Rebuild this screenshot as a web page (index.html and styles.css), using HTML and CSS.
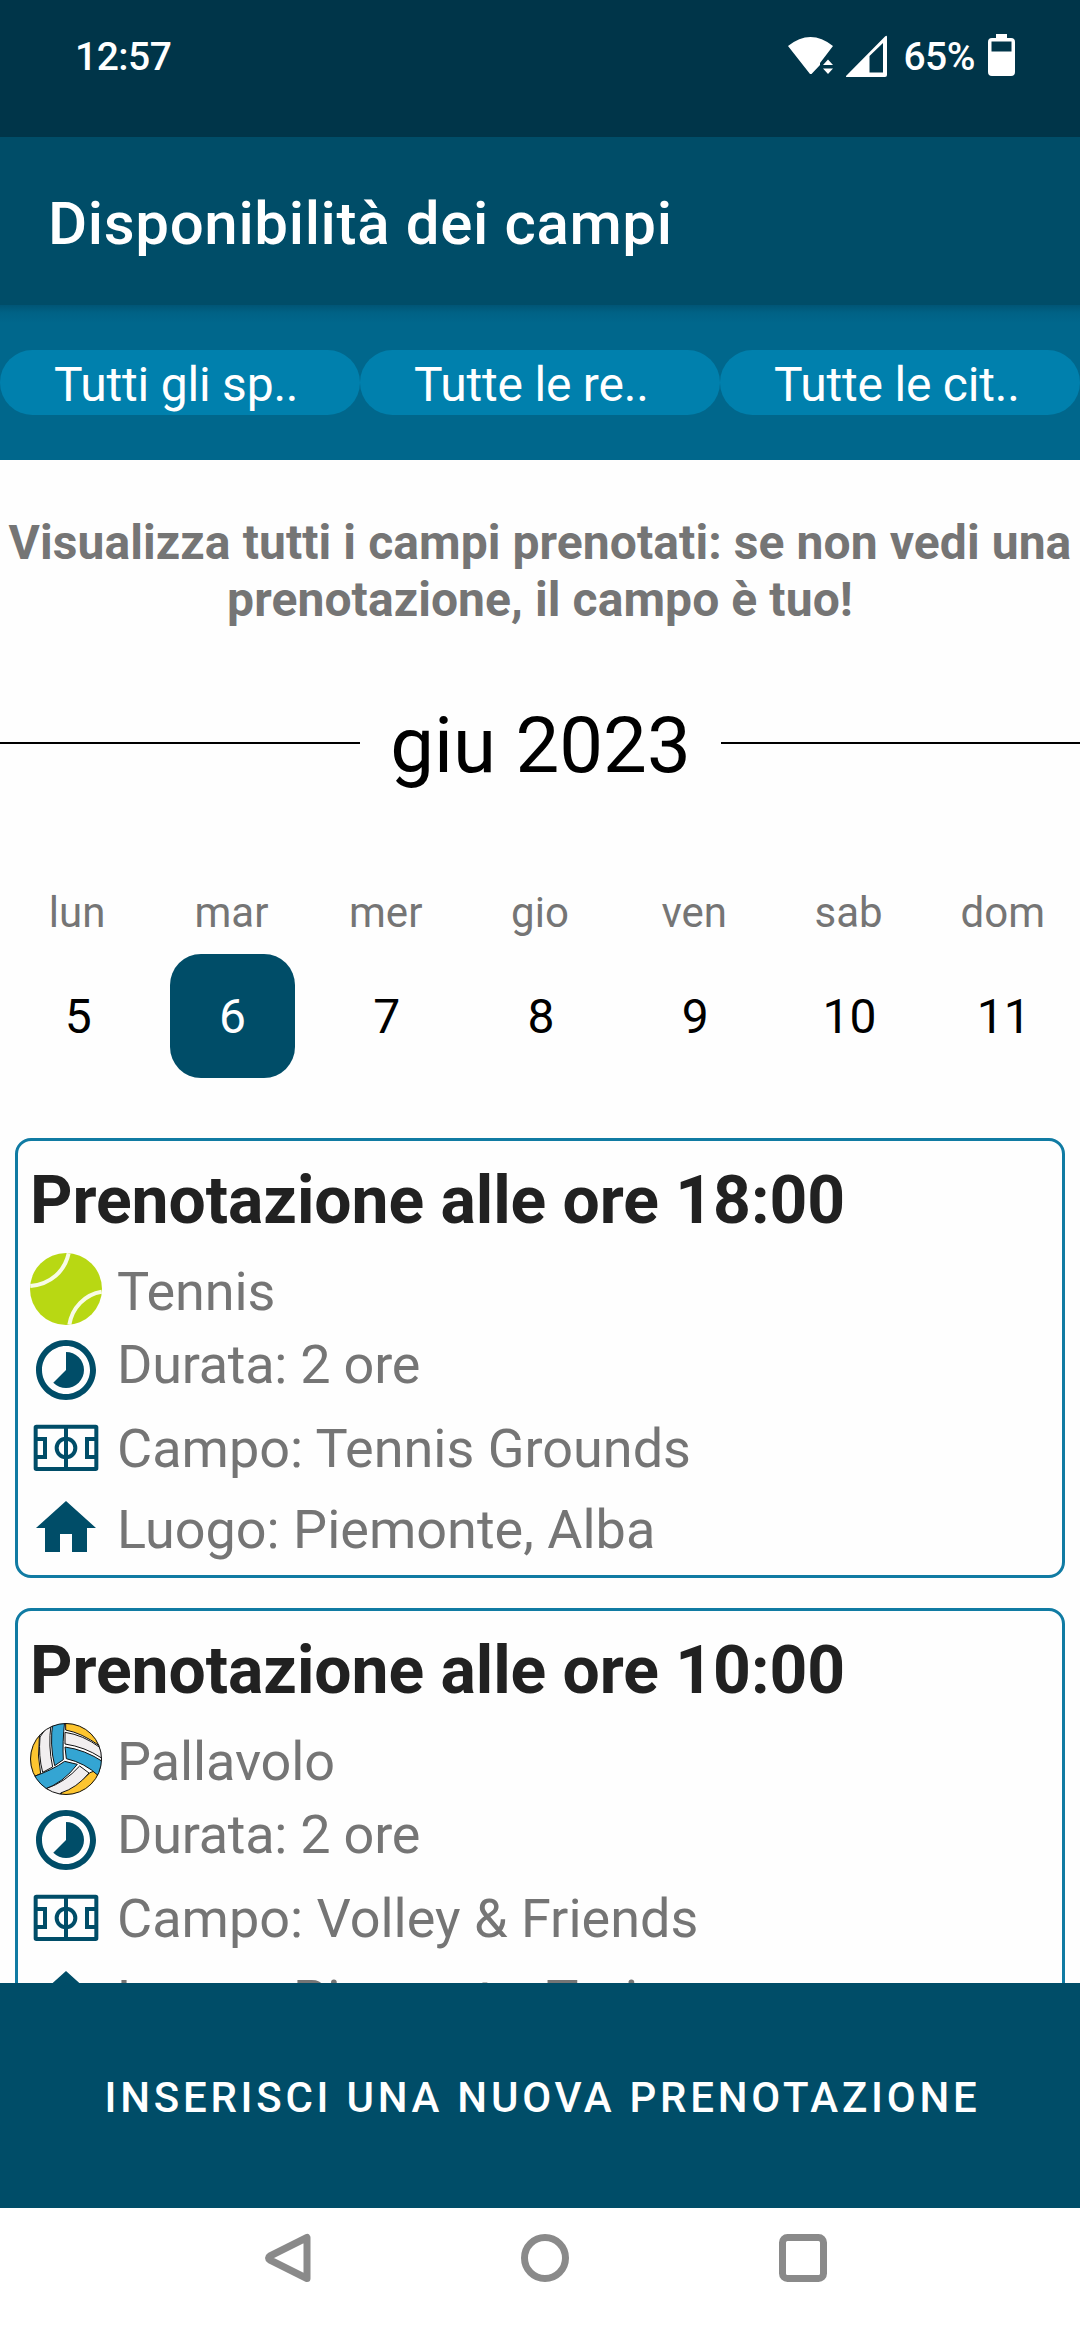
FILE: index.html
```html
<!DOCTYPE html>
<html lang="it">
<head>
<meta charset="utf-8">
<title>Disponibilità dei campi</title>
<link rel="stylesheet" href="styles.css">
</head>
<body>
<svg class="sprite" aria-hidden="true">
  <symbol id="timelapse" viewBox="0 0 24 24"><path d="M16.24 7.76C15.07 6.59 13.54 6 12 6v6l-4.24 4.24c2.34 2.34 6.14 2.34 8.49 0 2.34-2.34 2.34-6.14-.01-8.48zM12 2C6.48 2 2 6.48 2 12s4.48 10 10 10 10-4.48 10-10S17.52 2 12 2zm0 18c-4.42 0-8-3.58-8-8s3.58-8 8-8 8 3.58 8 8-3.58 8-8 8z"/></symbol>
  <symbol id="home" viewBox="0 0 24 24"><path d="M10 20v-6h4v6h5v-8h3L12 3 2 12h3v8z"/></symbol>
  <symbol id="field" viewBox="0 0 216 216"><g fill="none" stroke="currentColor" stroke-width="12"><rect x="17" y="44" width="182" height="127" rx="2"/><path d="M108 44v127M17 81h28v54H17M199 81h-28v54h28"/><circle cx="108" cy="108" r="28"/></g></symbol>
</svg>
<div class="screen">
  <header class="status">
    <span class="clock">12:57</span>
    <div class="indicators">
      <svg class="wifi" viewBox="0 0 45 38" width="45" height="38"><path d="M0 10Q22.500-8 45 10L37 20.500 32 27 32 29 23.500 38 22 38z"/><path class="cut" d="M33 38V27l6-7h6v18z"/><path d="M35 29l5-5.500 5 5.500zM35 32.500h10L40 38z"/></svg>
      <svg class="signal" viewBox="0 0 41 42" width="41" height="42"><path fill-rule="evenodd" d="M0 41L39 1.500Q41 0 41 2V40Q41 42 39 42H1Q-.5 42 0 41zM23.500 21V37.500H37V8z"/></svg>
      <span class="percent">65%</span>
      <svg class="battery" viewBox="0 0 27 42" width="27" height="42"><path fill-rule="evenodd" d="M8 0h11v4h4q4 0 4 4v30q0 4-4 4H4q-4 0-4-4V8q0-4 4-4h4zM3.500 7.500v10h20v-10z"/></svg>
    </div>
  </header>
  <div class="appbar"><h1>Disponibilità dei campi</h1></div>
  <div class="filters">
    <div class="pill">Tutti gli sp..</div>
    <div class="pill">Tutte le re..</div>
    <div class="pill">Tutte le cit..</div>
  </div>
  <main class="content">
    <p class="intro">Visualizza tutti i campi prenotati: se non vedi una<br>prenotazione, il campo è tuo!</p>
    <div class="month"><i class="rule"></i><span>giu 2023</span><i class="rule"></i></div>
    <div class="week">
      <div class="day"><span class="name">lun</span><span class="num">5</span></div>
      <div class="day"><span class="name">mar</span><span class="num selected">6</span></div>
      <div class="day"><span class="name">mer</span><span class="num">7</span></div>
      <div class="day"><span class="name">gio</span><span class="num">8</span></div>
      <div class="day"><span class="name">ven</span><span class="num">9</span></div>
      <div class="day"><span class="name">sab</span><span class="num">10</span></div>
      <div class="day"><span class="name">dom</span><span class="num">11</span></div>
    </div>
    <div class="list">
      <article class="card">
        <h2>Prenotazione alle ore 18:00</h2>
        <div class="row sport">
          <svg class="icon" viewBox="0 0 216 216"><circle cx="108" cy="108" r="108" fill="#b8d813"/><g fill="none" stroke="#f8fbe6" stroke-width="12"><path d="M116 1C104 55 62 94 1 99M215 116C165 124 126 164 118 215"/></g></svg>
          <span>Tennis</span>
        </div>
        <div class="row duration"><svg class="icon"><use href="#timelapse"/></svg><span>Durata: 2 ore</span></div>
        <div class="row court"><svg class="icon"><use href="#field"/></svg><span>Campo: Tennis Grounds</span></div>
        <div class="row place"><svg class="icon"><use href="#home"/></svg><span>Luogo: Piemonte, Alba</span></div>
      </article>
      <article class="card">
        <h2>Prenotazione alle ore 10:00</h2>
        <div class="row sport">
          <svg class="icon" viewBox="0 0 216 216">
            <clipPath id="ball"><circle cx="108" cy="108" r="107"/></clipPath>
            <g clip-path="url(#ball)" stroke="#111" stroke-width="3">
              <rect width="216" height="216" fill="#fff"/>
              <path fill="#fdc530" d="M107-5V21Q155 30 208 68L230 0zM28-5V45Q21 100 32 152L10 162-10 100zM230 130L180 149Q145 185 95 205L90 230H216z"/>
              <path fill="#f1eeef" d="M105 28Q160 36 209 73L225 110 213 104Q165 72 105 63zM62-5L30 42Q25 100 38 148L68 132Q54 70 63 5zM149 129Q105 178 50 196L80 230 92 210Q140 195 177 150z"/>
              <path fill="#34a5d3" d="M69-5Q58 65 74 128L100 110Q97 60 104-5zM105 72Q165 80 220 117L205 158Q165 120 109 107zM104 115Q70 140 5 163L40 200Q100 180 142 124z"/>
            </g>
            <circle cx="108" cy="108" r="106.500" fill="none" stroke="#111" stroke-width="3"/>
          </svg>
          <span>Pallavolo</span>
        </div>
        <div class="row duration"><svg class="icon"><use href="#timelapse"/></svg><span>Durata: 2 ore</span></div>
        <div class="row court"><svg class="icon"><use href="#field"/></svg><span>Campo: Volley &amp; Friends</span></div>
        <div class="row place"><svg class="icon"><use href="#home"/></svg><span>Luogo: Piemonte, Torino</span></div>
      </article>
    </div>
  </main>
  <button class="cta">INSERISCI UNA NUOVA PRENOTAZIONE</button>
  <nav class="navbar">
    <svg viewBox="0 0 52 52" width="52" height="52"><path d="M46 5.500V46.500L9 28Q6 26 9 24z"/></svg>
    <svg viewBox="0 0 52 52" width="52" height="52"><circle cx="26" cy="26" r="20.500"/></svg>
    <svg viewBox="0 0 52 52" width="52" height="52"><rect x="5.500" y="5.500" width="41" height="41" rx="5"/></svg>
  </nav>
</div>
</body>
</html>
```
FILE: styles.css
```css
* { box-sizing: border-box; }
body { margin: 0; font-family: Roboto, sans-serif; background: #fff; }
h1, h2, p { margin: 0; }
svg { display: block; flex: none; }
.sprite { position: absolute; width: 0; height: 0; }
.screen { width: 1080px; height: 2340px; display: flex; flex-direction: column; overflow: hidden; }

.status { height: 137px; flex: none; background: #003549; color: #fff; display: flex; justify-content: space-between; padding: 33px 65px 0 75px; font-size: 39px; font-weight: 500; line-height: 46px; letter-spacing: -.5px; }
.indicators { display: flex; }
.indicators svg { fill: #fff; }
.indicators .cut { fill: #003549; }
.wifi { margin: 3px 13px 0 0; }
.signal { margin: 2px 16px 0 0; }
.percent { margin-right: 13px; }
.battery { margin-top: 1px; }
.clock, .percent { padding-top: 1px; }

.appbar { height: 168px; flex: none; background: #004d68; color: #fff; padding: 52px 48px 0; }
.appbar h1 { font-size: 60px; line-height: 70px; font-weight: 500; letter-spacing: .65px; }

.filters { height: 155px; flex: none; display: flex; align-items: flex-start; padding-top: 45px; background: linear-gradient(rgba(0, 40, 60, .28), rgba(0, 40, 60, .08) 8px, transparent 18px), #00678c; }
.pill { flex: 1; height: 65px; border-radius: 33px; background: #0080ad; color: #fff; padding: 7px 0 0 54px; font-size: 48px; line-height: 56px; letter-spacing: -.2px; white-space: nowrap; }

.content { height: 1523px; flex: none; overflow: hidden; background: #fefefe; }
.intro { padding-top: 54px; text-align: center; font-size: 48px; line-height: 57px; font-weight: 700; letter-spacing: .08px; color: #757575; white-space: nowrap; }
.month { display: grid; grid-template-columns: 360px 1fr 359px; align-items: center; height: 92px; margin-top: 69px; font-size: 78px; line-height: 86px; text-align: center; color: #000; }
.month span { padding-top: 6px; }
.rule { height: 2px; background: #000; }
.week { display: grid; grid-template-columns: repeat(7, 1fr); margin-top: 99px; }
.day { display: flex; flex-direction: column; align-items: center; }
.name { font-size: 42px; line-height: 50px; color: #757575; }
.num { width: 125px; height: 124px; margin: 16px 0 0 2px; border-radius: 31px; font-size: 48px; line-height: 126px; text-align: center; color: #000; }
.num.selected { background: #004d68; color: #fff; }

.list { display: flex; flex-direction: column; gap: 30px; padding: 60px 15px 0; }
.card { height: 440px; border: 3px solid #107ba3; border-radius: 16px; padding: 21px 12px 0; }
.card h2 { font-size: 66px; line-height: 78px; font-weight: 700; letter-spacing: -.04px; color: #212121; white-space: nowrap; }
.row { display: flex; gap: 15px; font-size: 54px; line-height: 63px; color: #757575; white-space: nowrap; }
.icon { width: 72px; height: 72px; fill: #004d68; color: #004d68; }
.sport { margin-top: 13px; }
.sport span { padding-top: 7px; letter-spacing: -.1px; }
.duration { margin-top: 9px; }
.duration span { margin-top: -1px; letter-spacing: -.25px; }
.court { margin-top: 6px; }
.court span { padding-top: 5px; }
.place { margin-top: 8px; }
.place span { padding-top: 6px; }

.cta { height: 225px; flex: none; border: 0; padding: 4px 0 0 5px; background: #004d68; color: #fff; font: 500 42px/50px Roboto, sans-serif; letter-spacing: 3.75px; }
.navbar { height: 132px; flex: none; background: #fff; display: flex; padding: 24px 0 0 261px; gap: 206px; }
.navbar svg { fill: none; stroke: #8a8a8a; stroke-width: 7; stroke-linejoin: round; }
```
